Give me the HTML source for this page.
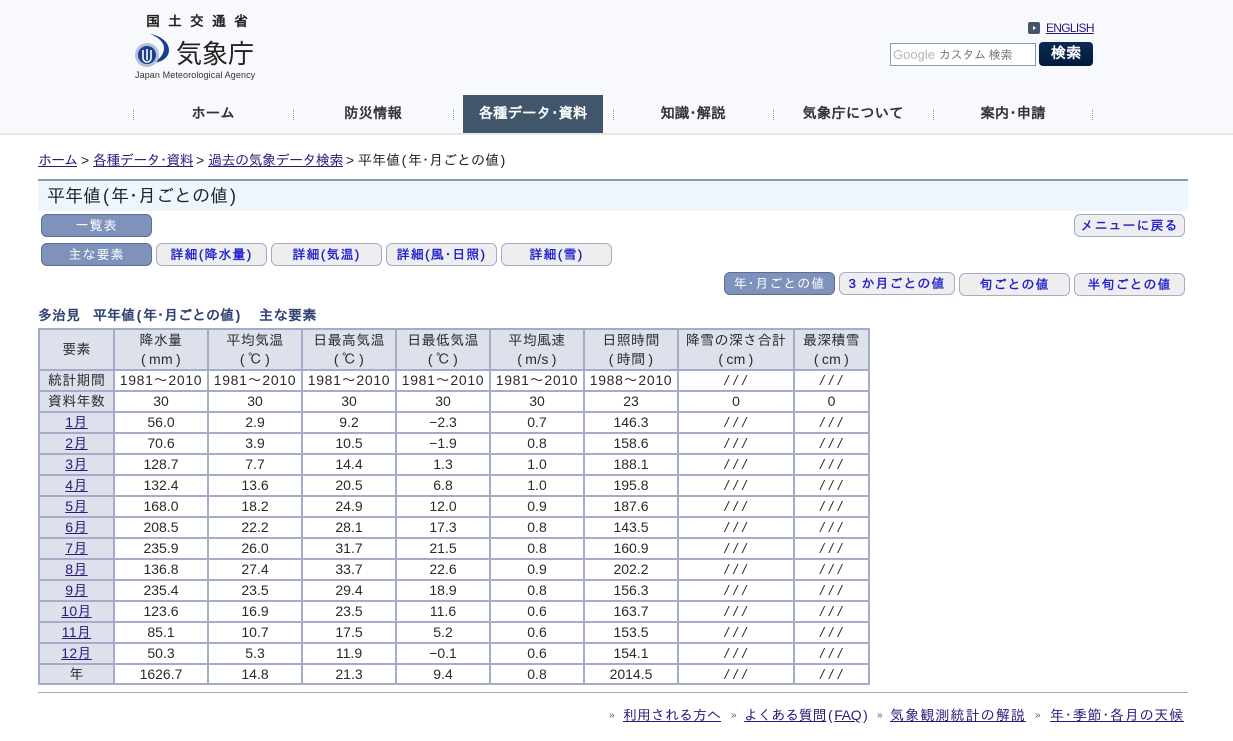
<!DOCTYPE html>
<html lang="ja"><head><meta charset="utf-8"><title>平年値</title>
<style>
html,body{margin:0;padding:0;background:#fff}
body{width:1233px;height:741px;position:relative;overflow:hidden;font-family:"Liberation Sans","IPAGothic","Noto Sans CJK JP",sans-serif;font-size:14px;color:#222}
.a{position:absolute;white-space:nowrap}
a{color:#2a1a7a;text-decoration:underline}
.p{display:inline-block;width:8px;text-align:center}
#hd{position:absolute;left:0;top:0;width:1233px;height:133px;background:#f8f9fc;border-bottom:2px solid #e6e6e6}
.nav{position:absolute;top:95px;height:38px;width:140px;line-height:39px;text-align:center;font-size:14.5px;font-weight:bold;color:#333}
.sep{position:absolute;top:109px;height:11px;border-left:1px dotted #999}
.btn{position:absolute;height:21px;line-height:21px;text-align:center;font-size:13px;box-sizing:content-box;border:1px solid #a3adc9;border-radius:6px;background:#eee;color:#1a1acc;white-space:nowrap;letter-spacing:1px;-webkit-text-stroke:.35px #1a1acc}
.btn .p{width:6px}
.on{background:#7f92bb;border-color:#5a6d96;color:#fff;-webkit-text-stroke:0}
table{position:absolute;left:38px;top:328px;border-collapse:collapse;table-layout:fixed;width:830px;font-size:14px}
td,th{border:2px solid #a3adc9;padding:0;height:19px;line-height:19px;text-align:center;font-weight:normal;overflow:hidden;white-space:nowrap;color:#2a2a2a}
th{background:#dce1ec;letter-spacing:.3px}
th .p{width:11px}
tr.h th{height:39px;line-height:19px}
tr:nth-child(2) td{letter-spacing:.7px}
tr:last-child td,tr:last-child th{height:18px;line-height:18px}
td:nth-child(n+8){letter-spacing:5px;padding-left:4px;box-sizing:border-box;font-style:italic}
tr:nth-child(2) td:nth-child(n+8){letter-spacing:5px}
tr:nth-child(3) td:nth-child(n+8){letter-spacing:0;padding-left:0;font-style:normal}
.ar{color:#556;font-size:10px;line-height:16px;top:708px}
</style></head><body>
<div id="hd"></div>
<div class="a" style="left:146px;top:13px;font-size:14px;letter-spacing:8px;color:#222;font-weight:bold">国土交通省</div>
<svg class="a" style="left:134px;top:33px" width="40" height="36" viewBox="0 0 40 36"><path d="M16 1C28 3 35 10 35 17C35 24 29 29 19 30C26 26 30 21 30 15C30 9 24 4 16 1Z" fill="#1c3f8c"/><circle cx="13" cy="22" r="12" fill="#b4c0dc"/><circle cx="13" cy="22" r="9" fill="#1c3f8c"/><path d="M9 17V25A4 4 0 0 0 17 25V17M13 16V27" fill="none" stroke="#fff" stroke-width="1.6"/></svg>
<div class="a" style="left:176px;top:38px;font-size:26px;line-height:30px;color:#222;font-family:'Noto Sans CJK JP',sans-serif">気象庁</div>
<div class="a" style="left:135px;top:69px;font-size:9px;line-height:12px;color:#333;letter-spacing:.1px">Japan Meteorological Agency</div>

<svg class="a" style="left:1028px;top:22px" width="12" height="12"><rect width="12" height="12" rx="2" fill="#42566b"/><path d="M5 4l3 2-3 2z" fill="#fff"/></svg>
<a class="a" style="left:1046px;top:20px;font-size:12px;line-height:16px;letter-spacing:-.7px" href="#">ENGLISH</a>
<div class="a" style="left:890px;top:43px;width:144px;height:21px;border:1px solid #8a9bb0;background:#fff;line-height:22px;font-size:12px;color:#777;letter-spacing:-.3px"><span style="color:#b5b5b5;font-size:13px;margin:0 4px 0 2px;letter-spacing:0">Google</span>カスタム 検索</div>
<div class="a" style="left:1039px;top:42px;width:54px;height:24px;border-radius:4px;background:linear-gradient(#0c2a52,#001a3c);color:#fff;font-weight:bold;font-size:15px;line-height:24px;text-align:center">検索</div>

<div class="nav" style="left:463px;background:#42566b;color:#fff">各種データ･資料</div>
<div class="nav" style="left:143px">ホーム</div>
<div class="nav" style="left:303px">防災情報</div>
<div class="nav" style="left:623px">知識･解説</div>
<div class="nav" style="left:783px">気象庁について</div>
<div class="nav" style="left:943px">案内･申請</div>
<div class="sep" style="left:133px"></div><div class="sep" style="left:293px"></div><div class="sep" style="left:453px"></div><div class="sep" style="left:613px"></div><div class="sep" style="left:773px"></div><div class="sep" style="left:933px"></div><div class="sep" style="left:1092px"></div>

<a class="a" style="left:38px;top:151px;line-height:18px;letter-spacing:-1px" href="#">ホーム</a>
<div class="a" style="left:81px;top:151px;line-height:18px">&gt;</div>
<a class="a" style="left:93px;top:151px;line-height:18px;letter-spacing:-.6px" href="#">各種データ･資料</a>
<div class="a" style="left:196px;top:151px;line-height:18px">&gt;</div>
<a class="a" style="left:208px;top:151px;line-height:18px;letter-spacing:-.5px" href="#">過去の気象データ検索</a>
<div class="a" style="left:346px;top:151px;line-height:18px">&gt;</div>
<div class="a" style="left:358px;top:151px;line-height:18px">平年値<span class="p">(</span>年･月ごとの値<span class="p">)</span></div>

<div class="a" style="left:38px;top:179px;width:1141px;height:30px;padding-left:9px;background:#eef6fd;border-top:2px solid #8a9bb8;font-size:18px;line-height:30px;color:#222">平年値<span class="p" style="width:10px">(</span>年･月ごとの値<span class="p" style="width:10px">)</span></div>

<div class="btn on" style="left:41px;top:214px;width:109px">一覧表</div>
<div class="btn" style="left:1074px;top:214px;width:109px">メニューに戻る</div>
<div class="btn on" style="left:41px;top:243px;width:109px">主な要素</div>
<div class="btn" style="left:156px;top:243px;width:109px">詳細<span class="p">(</span>降水量<span class="p">)</span></div>
<div class="btn" style="left:271px;top:243px;width:109px">詳細<span class="p">(</span>気温<span class="p">)</span></div>
<div class="btn" style="left:386px;top:243px;width:109px">詳細<span class="p">(</span>風･日照<span class="p">)</span></div>
<div class="btn" style="left:501px;top:243px;width:109px">詳細<span class="p">(</span>雪<span class="p">)</span></div>
<div class="btn on" style="left:724px;top:272px;width:109px">年･月ごとの値</div>
<div class="btn" style="left:839px;top:272px;width:114px">3 か月ごとの値</div>
<div class="btn" style="left:959px;top:273px;width:109px">旬ごとの値</div>
<div class="btn" style="left:1074px;top:273px;width:109px">半旬ごとの値</div>

<div class="a" style="left:38px;top:307px;line-height:17px;font-weight:bold;color:#2f3f70;font-size:14px">多治見</div>
<div class="a" style="left:93px;top:307px;line-height:17px;font-weight:bold;color:#2f3f70;font-size:14px">平年値<span class="p">(</span>年･月ごとの値<span class="p">)</span></div>
<div class="a" style="left:259px;top:307px;line-height:17px;font-weight:bold;color:#2f3f70;font-size:14px;letter-spacing:.5px">主な要素</div>

<table>
<colgroup><col style="width:75px"><col style="width:94px"><col style="width:94px"><col style="width:94px"><col style="width:94px"><col style="width:94px"><col style="width:94px"><col style="width:116px"><col style="width:75px"></colgroup>
<tr class="h"><th>要素</th><th>降水量<br><span class="p">(</span>mm<span class="p">)</span></th><th>平均気温<br><span class="p">(</span>℃<span class="p">)</span></th><th>日最高気温<br><span class="p">(</span>℃<span class="p">)</span></th><th>日最低気温<br><span class="p">(</span>℃<span class="p">)</span></th><th>平均風速<br><span class="p">(</span>m/s<span class="p">)</span></th><th>日照時間<br><span class="p">(</span>時間<span class="p">)</span></th><th>降雪の深さ合計<br><span class="p">(</span>cm<span class="p">)</span></th><th>最深積雪<br><span class="p">(</span>cm<span class="p">)</span></th></tr>
<tr><th>統計期間</th><td>1981～2010</td><td>1981～2010</td><td>1981～2010</td><td>1981～2010</td><td>1981～2010</td><td>1988～2010</td><td>///</td><td>///</td></tr>
<tr><th>資料年数</th><td>30</td><td>30</td><td>30</td><td>30</td><td>30</td><td>23</td><td>0</td><td>0</td></tr>
<tr><th><a href="#">1月</a></th><td>56.0</td><td>2.9</td><td>9.2</td><td>−2.3</td><td>0.7</td><td>146.3</td><td>///</td><td>///</td></tr>
<tr><th><a href="#">2月</a></th><td>70.6</td><td>3.9</td><td>10.5</td><td>−1.9</td><td>0.8</td><td>158.6</td><td>///</td><td>///</td></tr>
<tr><th><a href="#">3月</a></th><td>128.7</td><td>7.7</td><td>14.4</td><td>1.3</td><td>1.0</td><td>188.1</td><td>///</td><td>///</td></tr>
<tr><th><a href="#">4月</a></th><td>132.4</td><td>13.6</td><td>20.5</td><td>6.8</td><td>1.0</td><td>195.8</td><td>///</td><td>///</td></tr>
<tr><th><a href="#">5月</a></th><td>168.0</td><td>18.2</td><td>24.9</td><td>12.0</td><td>0.9</td><td>187.6</td><td>///</td><td>///</td></tr>
<tr><th><a href="#">6月</a></th><td>208.5</td><td>22.2</td><td>28.1</td><td>17.3</td><td>0.8</td><td>143.5</td><td>///</td><td>///</td></tr>
<tr><th><a href="#">7月</a></th><td>235.9</td><td>26.0</td><td>31.7</td><td>21.5</td><td>0.8</td><td>160.9</td><td>///</td><td>///</td></tr>
<tr><th><a href="#">8月</a></th><td>136.8</td><td>27.4</td><td>33.7</td><td>22.6</td><td>0.9</td><td>202.2</td><td>///</td><td>///</td></tr>
<tr><th><a href="#">9月</a></th><td>235.4</td><td>23.5</td><td>29.4</td><td>18.9</td><td>0.8</td><td>156.3</td><td>///</td><td>///</td></tr>
<tr><th><a href="#">10月</a></th><td>123.6</td><td>16.9</td><td>23.5</td><td>11.6</td><td>0.6</td><td>163.7</td><td>///</td><td>///</td></tr>
<tr><th><a href="#">11月</a></th><td>85.1</td><td>10.7</td><td>17.5</td><td>5.2</td><td>0.6</td><td>153.5</td><td>///</td><td>///</td></tr>
<tr><th><a href="#">12月</a></th><td>50.3</td><td>5.3</td><td>11.9</td><td>−0.1</td><td>0.6</td><td>154.1</td><td>///</td><td>///</td></tr>
<tr><th>年</th><td>1626.7</td><td>14.8</td><td>21.3</td><td>9.4</td><td>0.8</td><td>2014.5</td><td>///</td><td>///</td></tr>
</table>

<div class="a" style="left:38px;top:692px;width:1150px;height:1px;background:#aaa"></div>
<div class="a ar" style="left:609px">»</div>
<a class="a" style="left:623px;top:707px;line-height:17px" href="#">利用される方へ</a>
<div class="a ar" style="left:731px">»</div>
<a class="a" style="left:744px;top:707px;line-height:17px;letter-spacing:-.3px" href="#">よくある質問<span class="p">(</span>FAQ<span class="p">)</span></a>
<div class="a ar" style="left:877px">»</div>
<a class="a" style="left:890px;top:707px;line-height:17px;letter-spacing:1.1px" href="#">気象観測統計の解説</a>
<div class="a ar" style="left:1035px">»</div>
<a class="a" style="left:1050px;top:707px;line-height:17px;letter-spacing:.8px" href="#">年･季節･各月の天候</a>
</body></html>
